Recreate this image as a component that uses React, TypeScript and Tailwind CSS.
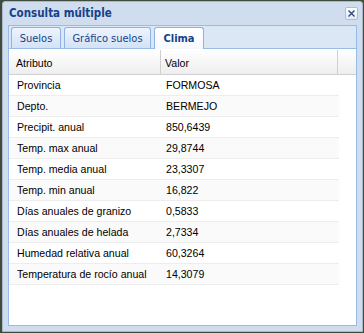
import React from "react";

const rows: [string, string][] = [
  ["Provincia", "FORMOSA"],
  ["Depto.", "BERMEJO"],
  ["Precipit. anual", "850,6439"],
  ["Temp. max anual", "29,8744"],
  ["Temp. media anual", "23,3307"],
  ["Temp. min anual", "16,822"],
  ["Días anuales de granizo", "0,5833"],
  ["Días anuales de helada", "2,7334"],
  ["Humedad relativa anual", "60,3264"],
  ["Temperatura de rocío anual", "14,3079"],
];

const tahoma = { fontFamily: '"DejaVu Sans Condensed", "DejaVu Sans", sans-serif' };
const arial = { fontFamily: '"Liberation Sans", Arial, sans-serif' };

export default function App() {
  return (
    <div className="w-[364px] h-[333px] bg-[#3f4c3d] overflow-hidden">
      <div className="ml-[2px] mt-[1px] w-[361px] h-[331px] border border-[#a9b7c8] rounded-t-[3px] bg-[#d0ddee] flex flex-col px-[5px]">
        <div className="h-[23px] flex items-center justify-between pl-[1px] pr-0">
          <span className="text-[11.5px] font-bold text-[#15428b] leading-none" style={tahoma}>
            Consulta múltiple
          </span>
          <div className="w-[13px] h-[13px] -mt-[1px] mr-[-1px] rounded-[2px] border border-[#a8c0e0] bg-gradient-to-b from-[#ffffff] to-[#e2ebf7] flex items-center justify-center">
            <svg width="9" height="9" viewBox="0 0 9 9">
              <path d="M1.5 1.5 L7.5 7.5 M7.5 1.5 L1.5 7.5" stroke="#2b4a80" strokeWidth="1.4" />
            </svg>
          </div>
        </div>
        <div className="flex-1 flex flex-col mb-[5px]">
          <div className="h-[24px] border border-[#99bbe8] bg-[#dce7f6] flex items-end gap-[3px] pl-[2px] pr-0">
            <div className="w-[50px] h-[21px] rounded-t-[3px] border border-b-0 border-[#8db2e3] bg-gradient-to-b from-[#eef4fd] to-[#d3e2f6] flex items-center justify-center text-[11px] text-[#15428b] leading-none" style={tahoma}>
              Suelos
            </div>
            <div className="w-[87px] h-[21px] rounded-t-[3px] border border-b-0 border-[#8db2e3] bg-gradient-to-b from-[#eef4fd] to-[#d3e2f6] flex items-center justify-center text-[11px] text-[#15428b] leading-none" style={tahoma}>
              Gráfico suelos
            </div>
            <div className="w-[50px] h-[22px] -mb-[1px] rounded-t-[3px] border border-b-0 border-[#8db2e3] bg-gradient-to-b from-[#ffffff] to-[#f5f9fe] flex items-center justify-center text-[11px] font-bold text-[#15428b] leading-none" style={tahoma}>
              Clima
            </div>
          </div>
          <div className="flex-1 border border-t-0 border-[#99bbe8] bg-white pt-[1px]">
            <div className="h-[25px] flex border-b border-[#d0d0d0] bg-gradient-to-b from-[#ffffff] to-[#eeeeee] text-[10.6px] text-black" style={arial}>
              <div className="w-[152px] border-r border-[#d0d0d0] flex items-center pl-[7px] pt-[4px]">Atributo</div>
              <div className="w-[177px] border-r border-[#d0d0d0] flex items-center pl-[4px] pt-[4px]">Valor</div>
              <div className="flex-1" />
            </div>
            <div className="w-[330px]">
              {rows.map(([a, v], i) => (
                <div
                  key={a}
                  className={`h-[21px] flex items-center border-b border-[#ededed] text-[10.6px] text-black pt-[1px] ${i % 2 === 1 ? "bg-[#fafafa]" : "bg-white"}`}
                  style={arial}
                >
                  <div className="w-[152px] pl-[8px]">{a}</div>
                  <div className="flex-1 pl-[5px]">{v}</div>
                </div>
              ))}
            </div>
          </div>
        </div>
      </div>
    </div>
  );
}
